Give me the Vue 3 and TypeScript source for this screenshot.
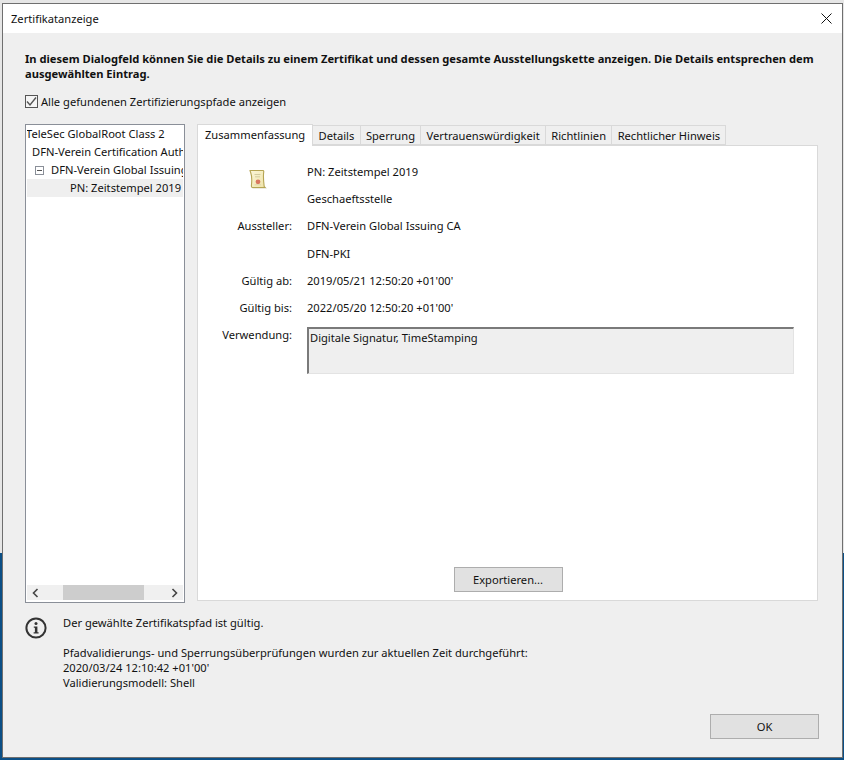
<script setup lang="ts">
const tabs: string[] = ['Zusammenfassung', 'Details', 'Sperrung', 'Vertrauenswürdigkeit', 'Richtlinien', 'Rechtlicher Hinweis']
const rows: { label: string; value: string }[] = [
  { label: '', value: 'Geschaeftsstelle' },
  { label: 'Aussteller:', value: 'DFN-Verein Global Issuing CA' },
  { label: '', value: 'DFN-PKI' },
  { label: 'Gültig ab:', value: "2019/05/21 12:50:20 +01'00'" },
  { label: 'Gültig bis:', value: "2022/05/20 12:50:20 +01'00'" },
]
</script>

<template>
  <div class="desktop">
    <div class="window">
      <header class="titlebar">
        <span class="title">Zertifikatanzeige</span>
        <svg class="close" width="11" height="11" viewBox="0 0 11 11"><path d="M0.5 0.5L10.5 10.5M10.5 0.5L0.5 10.5" stroke="#111" stroke-width="1" fill="none" /></svg>
      </header>
      <main class="body">
        <p class="intro">In diesem Dialogfeld können Sie die Details zu einem Zertifikat und dessen gesamte Ausstellungskette anzeigen. Die Details entsprechen dem ausgewählten Eintrag.</p>
        <label class="check">
          <span class="box"><svg width="11" height="11" viewBox="0 0 11 11"><path d="M1 5.5L4 9L10 1.5" stroke="#555" stroke-width="1.4" fill="none" /></svg></span>
          <span>Alle gefundenen Zertifizierungspfade anzeigen</span>
        </label>
        <div class="columns">
          <aside class="tree">
            <div class="tree-list">
              <div class="node n0">TeleSec GlobalRoot Class 2</div>
              <div class="node n1">DFN-Verein Certification Authority 2</div>
              <div class="node n2"><span class="minus"></span>DFN-Verein Global Issuing CA</div>
              <div class="node n3 selected">PN: Zeitstempel 2019</div>
            </div>
            <div class="hscroll">
              <svg class="arrow" width="8" height="10" viewBox="0 0 8 10"><path d="M6 1L2 5L6 9" stroke="#444" stroke-width="1.6" fill="none" /></svg>
              <div class="track"><div class="thumb"></div></div>
              <svg class="arrow" width="8" height="10" viewBox="0 0 8 10"><path d="M2 1L6 5L2 9" stroke="#444" stroke-width="1.6" fill="none" /></svg>
            </div>
          </aside>
          <section class="tabs">
            <nav class="tabbar">
              <div v-for="(t, i) in tabs" :key="t" class="tab" :class="{ active: i === 0 }">{{ t }}</div>
            </nav>
            <div class="panel">
              <div class="summary">
                <div class="row">
                  <div class="label icon-cell">
                    <svg width="20" height="21" viewBox="0 0 20 21">
                      <defs>
                        <linearGradient id="paper" x1="0" y1="0" x2="1" y2="1">
                          <stop offset="0" stop-color="#fbf6d8" />
                          <stop offset="1" stop-color="#efe3a8" />
                        </linearGradient>
                      </defs>
                      <path d="M4.5 19.5H19L17 17.5H4Z" fill="#d9d6c4" />
                      <path d="M2 1.5H15C16 1.5 15.8 3 15.6 4C15.2 8 15.6 13 16.2 17.5L17 18.5H4.5C3.4 18.5 3.3 17 3.5 15.5C4 11 3.6 6 2.6 3.2C2.3 2.4 2 1.9 2 1.5Z" fill="url(#paper)" stroke="#b5a453" stroke-width="1.1" />
                      <path d="M6.5 5.5H12.5M7 7.8H12" stroke="#d3cca0" stroke-width="1" />
                      <circle cx="10" cy="12.8" r="2.4" fill="#d9775f" />
                      <path d="M6.5 15.8H13" stroke="#ddd6ac" stroke-width="1" />
                    </svg>
                  </div>
                  <div class="value">PN: Zeitstempel 2019</div>
                </div>
                <div v-for="r in rows" :key="r.value" class="row">
                  <div class="label">{{ r.label }}</div>
                  <div class="value">{{ r.value }}</div>
                </div>
                <div class="row usage">
                  <div class="label">Verwendung:</div>
                  <div class="usage-box">Digitale Signatur, TimeStamping</div>
                </div>
              </div>
              <div class="export"><button class="btn export-btn">Exportieren...</button></div>
            </div>
          </section>
        </div>
        <div class="status">
          <svg class="info" width="22" height="22" viewBox="0 0 22 22">
            <circle cx="11" cy="11" r="9.6" fill="none" stroke="#333" stroke-width="2" />
            <circle cx="11" cy="6.6" r="1.5" fill="#333" />
            <path d="M8.8 9.6H12.4V15.2H13.6V16.4H8.6V15.2H9.9V10.8H8.8Z" fill="#333" />
          </svg>
          <div class="status-text">
            <p class="valid">Der gewählte Zertifikatspfad ist gültig.</p>
            <p>Pfadvalidierungs- und Sperrungsüberprüfungen wurden zur aktuellen Zeit durchgeführt:</p>
            <p>2020/03/24 12:10:42 +01'00'</p>
            <p>Validierungsmodell: Shell</p>
          </div>
        </div>
        <footer class="footer"><button class="btn ok">OK</button></footer>
      </main>
    </div>
  </div>
</template>

<style>
html, body { margin: 0; padding: 0; }
</style>

<style scoped>
.desktop {
  width: 844px;
  height: 760px;
  box-sizing: border-box;
  padding: 3px 1px 2px 2px;
  background: linear-gradient(#e6e6e6 553px, #0b4f86 553px);
  font-family: "Noto Sans", "Open Sans", sans-serif;
  font-size: 11.15px;
  color: #111;
  overflow: hidden;
}
.window {
  height: 100%;
  box-sizing: border-box;
  display: flex;
  flex-direction: column;
  background: #efefef;
  border: 1px solid #6f6f6f;
}
.titlebar {
  height: 29px;
  flex: none;
  background: #fff;
  display: flex;
  align-items: center;
  justify-content: space-between;
  padding: 0 10px 0 8px;
}
.body {
  flex: 1;
  display: flex;
  flex-direction: column;
  padding: 18px 24px 0 22px;
  min-height: 0;
}
.intro { margin: 0; font-weight: 700; line-height: 15px; }
.check { display: flex; align-items: center; gap: 3px; margin-top: 11px; height: 18px; }
.box {
  width: 11px; height: 11px; border: 1px solid #555; background: #f5f5f5;
  display: flex;
}
.columns { display: flex; gap: 12px; margin-top: 14px; height: 479px; }
.tree {
  width: 160px; flex: none; box-sizing: border-box;
  border: 1px solid #8a8f98; background: #fff; padding: 0 1px 2px;
  display: flex; flex-direction: column; overflow: hidden;
}
.tree-list { flex: 1; overflow: hidden; }
.node { height: 18px; line-height: 18px; white-space: nowrap; display: flex; align-items: center; overflow: hidden; }
.n0 { display: block; text-indent: -1px; }
.n1 { padding-left: 5px; }
.n2 { padding-left: 8px; }
.n3 { padding-left: 43px; }
.selected { background: #efefef; }
.minus {
  width: 7px; height: 7px; border: 1px solid #8a8f98; margin-right: 7px; flex: none; position: relative;
}
.minus::after { content: ""; position: absolute; left: 1px; right: 1px; top: 3px; height: 1px; background: #555; }
.hscroll { height: 15px; background: #f0f0f0; display: flex; align-items: center; flex: none; }
.arrow { width: 17px; flex: none; }
.track { flex: 1; height: 100%; }
.thumb { margin-left: 19px; width: 81px; height: 100%; background: #cdcdcd; }
.tabs { flex: 1; display: flex; flex-direction: column; min-width: 0; margin-bottom: 2px; }
.tabbar { display: flex; height: 21px; align-items: flex-end; flex: none; position: relative; z-index: 1; }
.tab {
  height: 20px; line-height: 20px; box-sizing: border-box; padding: 0 5.3px;
  background: #efefef; border: 1px solid #d9d9d9; border-bottom: 1px solid #d9d9d9; margin-left: -1px;
}
.tab:first-child { margin-left: 0; }
.tab.active { height: 22px; line-height: 19px; background: #fff; border-bottom: 0; padding: 0 7px; margin-bottom: -1px; }
.panel {
  flex: 1; background: #fff; border: 1px solid #d9d9d9; display: flex; flex-direction: column; min-height: 0;
}
.summary { flex: 1; padding-top: 12px; }
.row { display: flex; height: 27.2px; gap: 15px; }
.row .label { width: 94px; text-align: right; flex: none; line-height: 27px; }
.row .icon-cell { display: flex; justify-content: center; align-items: flex-start; padding: 11px 0 0 26px; box-sizing: border-box; width: 94px; }
.value { line-height: 27px; }
.usage { height: auto; }
.usage .label { line-height: 20px; padding-top: 4px; }
.usage-box {
  box-sizing: border-box; width: 487px; height: 47px; margin-top: 6px; background: #efefef;
  border-top: 2px solid #7a7a7a; border-left: 2px solid #7a7a7a; border-right: 1px solid #e3e3e3; border-bottom: 1px solid #e3e3e3;
  padding: 1px 0 0 1px; line-height: 16px;
}
.export { display: flex; justify-content: center; padding: 0 0 8px 1px; }
.btn {
  font: inherit; color: inherit; background: #e1e1e1; border: 1px solid #adadad; padding: 0; border-radius: 0;
}
.export-btn { width: 109px; height: 25px; }
.status { display: flex; gap: 16px; margin-top: 12px; }
.info { flex: none; margin-top: 2px; }
.status-text p { margin: 0; line-height: 15px; }
.status-text .valid { margin-bottom: 15px; }
.footer { margin-top: auto; display: flex; justify-content: flex-end; padding-bottom: 18px; }
.ok { width: 109px; height: 25px; margin-right: -1px; }
</style>
